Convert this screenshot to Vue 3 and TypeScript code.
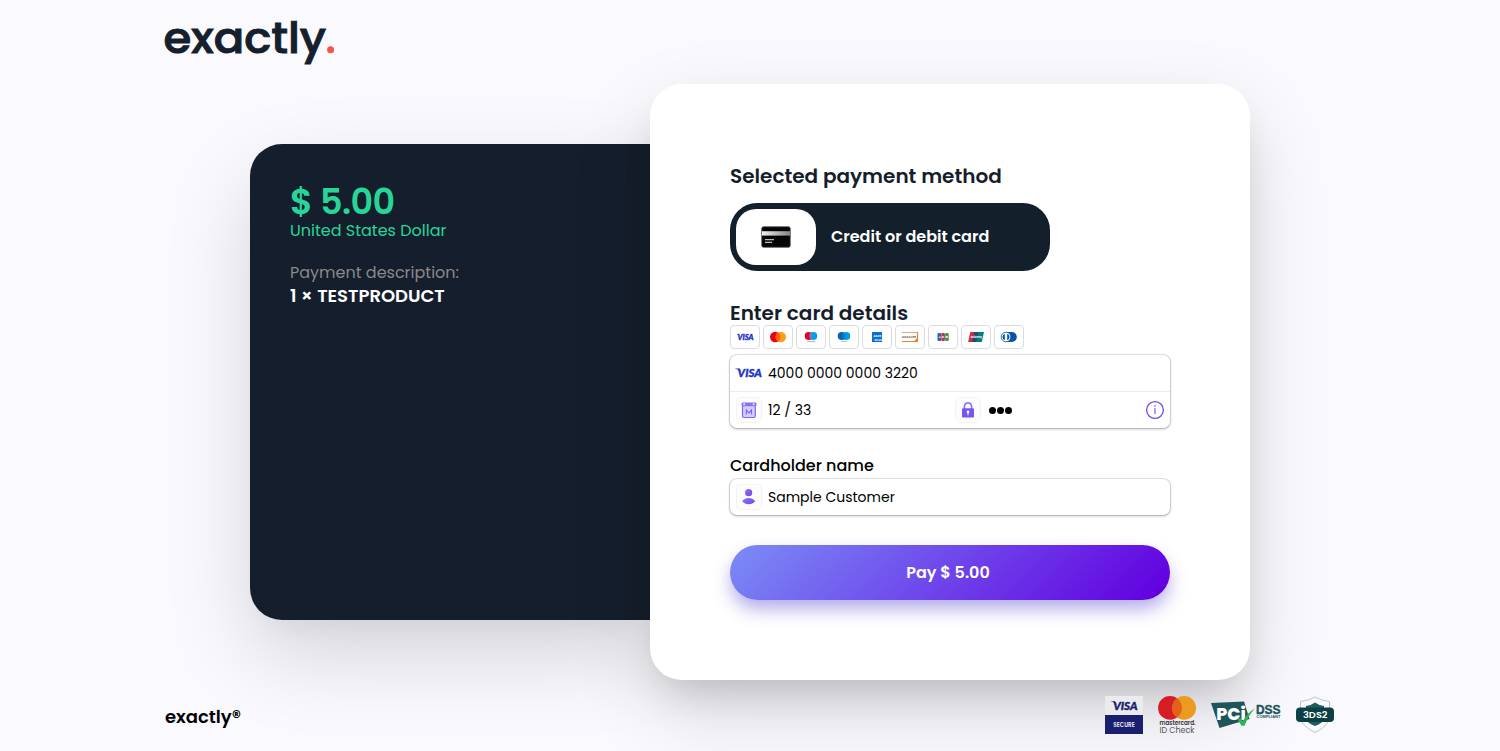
<script setup lang="ts">
interface Brand {
  id: string
  label: string
}

const brands: Brand[] = [
  { id: 'visa', label: 'Visa' },
  { id: 'mastercard', label: 'Mastercard' },
  { id: 'maestro', label: 'Maestro' },
  { id: 'cirrus', label: 'Cirrus' },
  { id: 'amex', label: 'American Express' },
  { id: 'discover', label: 'Discover' },
  { id: 'jcb', label: 'JCB' },
  { id: 'unionpay', label: 'UnionPay' },
  { id: 'diners', label: 'Diners Club' },
]

const amount = '$ 5.00'
const card = { number: '4000 0000 0000 3220', expiry: '12 / 33', holder: 'Sample Customer' }
</script>

<template>
  <div class="page">
    <header class="header">
      <svg class="logo" width="180" height="70" viewBox="0 0 180 70" role="img" aria-label="exactly.">
        <text class="logo-text" x="-1.5" y="42.6" textLength="162.5" lengthAdjust="spacingAndGlyphs">exactly</text>
        <circle cx="165.6" cy="39.8" r="3.5" fill="#f1583e" />
      </svg>
    </header>

    <main class="checkout">
      <section class="summary">
        <div class="amount">{{ amount }}</div>
        <div class="currency">United States Dollar</div>
        <div class="desc-label">Payment description:</div>
        <div class="desc">1 × TESTPRODUCT</div>
      </section>

      <section class="panel">
        <h2 class="title">Selected payment method</h2>
        <div class="method">
          <div class="method-icon">
            <svg width="30" height="22" viewBox="0 0 30 22">
              <defs>
                <linearGradient id="stripe" x1="0" x2="1" y1="0" y2="0">
                  <stop offset="0" stop-color="#f4f0f4" />
                  <stop offset="1" stop-color="#858185" />
                </linearGradient>
              </defs>
              <rect x="0.8" y="0.8" width="28.4" height="20.4" rx="1.6" fill="#050505" stroke="#444" stroke-width=".8" />
              <rect x="1" y="5.2" width="28" height="4.4" fill="url(#stripe)" />
              <path d="M4 13.6h9M4 16.4h7" stroke="#bbb" stroke-width="1.1" />
            </svg>
          </div>
          <span class="method-name">Credit or debit card</span>
        </div>

        <h2 class="title details-title">Enter card details</h2>
        <div class="brands">
          <span v-for="b in brands" :key="b.id" class="brand" :aria-label="b.label">
            <svg width="20" height="14" viewBox="0 0 20 14">
              <template v-if="b.id === 'visa'">
                <text class="visa-text visa-blue" x="2.6" y="9.8" font-size="7.8" textLength="16" lengthAdjust="spacingAndGlyphs">VISA</text>
                <path d="M.9 4.1h3l1.3 2.6C4.3 5.2 3 4.5.9 4.100z" fill="#1c36c8" />
              </template>
              <template v-else-if="b.id === 'mastercard'">
                <circle cx="7.2" cy="7" r="5.2" fill="#eb001b" />
                <circle cx="12.8" cy="7" r="5.2" fill="#f79e1b" />
                <path d="M10 2.6a5.2 5.2 0 0 1 0 8.8 5.2 5.2 0 0 1 0-8.8z" fill="#ff5f00" />
              </template>
              <template v-else-if="b.id === 'maestro'">
                <circle cx="7.7" cy="6" r="4" fill="#eb001b" />
                <circle cx="12.3" cy="6" r="4" fill="#00a2e5" />
                <path d="M10 2.7a4 4 0 0 1 0 6.6 4 4 0 0 1 0-6.6z" fill="#7375cf" />
                <text class="micro" x="6" y="12.2" textLength="8">maestro</text>
              </template>
              <template v-else-if="b.id === 'cirrus'">
                <circle cx="7.7" cy="6" r="4" fill="#0a62b4" />
                <circle cx="12.3" cy="6" r="4" fill="#009ddd" />
                <path d="M10 2.7a4 4 0 0 1 0 6.6 4 4 0 0 1 0-6.6z" fill="#0078c4" />
                <text class="micro" x="7" y="12.2" textLength="6">cirrus</text>
              </template>
              <template v-else-if="b.id === 'amex'">
                <rect x="5" y="2" width="10" height="10" fill="#0d6fce" />
                <text class="amex-text" x="6.2" y="6.6" textLength="8" lengthAdjust="spacingAndGlyphs">AME</text>
                <text class="amex-text" x="7.4" y="10.8" textLength="7.5" lengthAdjust="spacingAndGlyphs">RICAN</text>
              </template>
              <template v-else-if="b.id === 'discover'">
                <path d="M2 2.5h15.5" stroke="#e79a60" stroke-width=".9" />
                <path d="M2 11.500h15.500V2.100" fill="none" stroke="#f08024" stroke-width="1.200" />
                <path d="M13.500 12l4.500-5v5z" fill="#f08024" />
                <text class="discover-text" x="2" y="8.3" textLength="14" lengthAdjust="spacingAndGlyphs">DISCOVER</text>
              </template>
              <template v-else-if="b.id === 'jcb'">
                <rect x="4.5" y="3" width="3.6" height="8" rx="1" fill="#2467ad" />
                <rect x="8.3" y="3" width="3.6" height="8" rx="1" fill="#c92e4a" />
                <rect x="12.1" y="3" width="3.6" height="8" rx="1" fill="#379b45" />
                <text class="jcb-text" x="5.4" y="8.2" textLength="9.4">JCB</text>
              </template>
              <template v-else-if="b.id === 'unionpay'">
                <path d="M4.3 2h6L8.2 12H2.1z" fill="#d62b3c" />
                <path d="M8.3 2h5l-2.2 10H6.1z" fill="#244b75" />
                <path d="M12.5 2H18l-2.2 10h-5.5z" fill="#008085" />
                <text class="union-text" x="4.8" y="7.6" textLength="11" lengthAdjust="spacingAndGlyphs">UnionPay</text>
              </template>
              <template v-else>
                <path d="M6.8 2h6a5 5 0 0 1 0 10h-6z" fill="#0755a2" />
                <circle cx="7" cy="7" r="4.8" fill="#fff" stroke="#0755a2" stroke-width=".8" />
                <path d="M5.8 3.7a3.5 3.5 0 0 0 0 6.6zM8.2 3.7v6.6a3.5 3.5 0 0 0 0-6.6z" fill="#0755a2" />
              </template>
            </svg>
          </span>
        </div>

        <div class="field-group">
          <div class="row row-number">
            <svg class="visa-icon" width="28" height="12" viewBox="0 0 28 12">
              <text class="visa-text visa-blue" x="3.6" y="10.2" font-size="11.8" textLength="24.2" lengthAdjust="spacingAndGlyphs">VISA</text>
              <path d="M.6 1.500h4.800l2.400 4.500C6.200 3.400 3.800 2.200.6 1.500z" fill="#1c36c8" />
            </svg>
            <span class="value">{{ card.number }}</span>
          </div>
          <div class="row row-split">
            <span class="tile">
              <svg width="18" height="18" viewBox="0 0 18 18">
                <rect x="2.5" y="2.5" width="12.8" height="14" rx="1.5" fill="#d6ccfc" stroke="#8066f2" stroke-width="1.2" />
                <rect x="1.5" y="1.5" width="15" height="3.8" rx="1.3" fill="#8a72f4" />
                <circle cx="4.2" cy="3.2" r="1" fill="#e9e3ff" />
                <circle cx="13.6" cy="3.2" r="1" fill="#e9e3ff" />
                <path d="M6.3 13.6V9l2.6 3 2.600-3v4.600" fill="none" stroke="#7f62f0" stroke-width="1.100" />
              </svg>
            </span>
            <span class="value expiry">{{ card.expiry }}</span>
            <span class="tile">
              <svg width="16" height="18" viewBox="0 0 16 18">
                <path d="M4.4 8V5.5a3.6 3.6 0 0 1 7.2 0V8" fill="none" stroke="#8b73f5" stroke-width="1.7" />
                <rect x="2" y="7.2" width="12" height="9.3" rx="1.2" fill="#7656ee" />
                <circle cx="8" cy="10.8" r="1.3" fill="#fff" />
                <path d="M8 11v3.2" stroke="#fff" stroke-width="1" />
              </svg>
            </span>
            <span class="dots"><i></i><i></i><i></i></span>
            <svg class="info" width="20" height="20" viewBox="0 0 20 20">
              <circle cx="10" cy="10" r="8.4" fill="none" stroke="#7646ea" stroke-width="1.3" />
              <path d="M10 8v6M10 5v1.8" stroke="#af98f7" stroke-width="1.9" />
            </svg>
          </div>
        </div>

        <div class="label">Cardholder name</div>
        <div class="field-group holder">
          <span class="tile">
            <svg width="16" height="18" viewBox="0 0 16 18">
              <defs>
                <linearGradient id="person" x1="0" x2="1" y1="0" y2="1">
                  <stop offset="0" stop-color="#8878fb" />
                  <stop offset="1" stop-color="#7443e7" />
                </linearGradient>
              </defs>
              <circle cx="7.6" cy="4.7" r="3.6" fill="url(#person)" />
              <path d="M1.2 13.2C3 10.8 5 10 7.600 10s4.800.8 6.600 3.200c-1.600 2.100-4 3-6.600 3s-4.800-.9-6.400-3z" fill="url(#person)" />
            </svg>
          </span>
          <span class="value">{{ card.holder }}</span>
        </div>

        <button class="pay" type="button"><span class="pay-text">Pay {{ amount }}</span></button>
      </section>
    </main>

    <footer class="footer">
      <span class="company">exactly®</span>
      <div class="badges">
        <svg width="38" height="38" viewBox="0 0 38 38">
          <rect width="38" height="19" fill="#ebebed" />
          <rect y="19" width="38" height="19" fill="#191e6d" />
          <text class="visa-text visa-navy" x="8.2" y="14" font-size="11.8" textLength="24.3" lengthAdjust="spacingAndGlyphs">VISA</text>
          <path d="M5.3 5.3h4.5l2.2 4c-1.5-2.2-3.7-3.3-6.7-4z" fill="#191e6d" />
          <text class="secure-text" x="8.3" y="30.8" textLength="21.5" lengthAdjust="spacingAndGlyphs">SECURE</text>
        </svg>
        <svg width="38" height="38" viewBox="0 0 38 38">
          <circle cx="12" cy="11.9" r="11.9" fill="#d71d24" />
          <circle cx="26.1" cy="11.9" r="11.9" fill="#eb9b20" />
          <path d="M19.05 2.3a11.9 11.9 0 0 1 0 19.2 11.9 11.9 0 0 1 0-19.2z" fill="#e2611c" />
          <text class="mc-text" x="1.5" y="29.2" textLength="36" lengthAdjust="spacingAndGlyphs">mastercard.</text>
          <text class="id-text" x="1.5" y="37.4" textLength="35" lengthAdjust="spacingAndGlyphs">ID Check</text>
        </svg>
        <svg width="70" height="38" viewBox="0 0 70 38">
          <path d="M0 7l33-1.500 5.500 17.500L8.500 32z" fill="#20545b" />
          <text class="pci-text" x="5.300" y="23.600" textLength="29.500" lengthAdjust="spacingAndGlyphs">PCi</text>
          <path d="M26.5 23.5l3.2-1.6 2 3.6C35 19.500 39 15 44 12.500c-4.500 4.500-7.500 10-10.500 17.200h-3z" fill="#2eb25a" />
          <text class="dss-text" x="45" y="17.5" textLength="24.5" lengthAdjust="spacingAndGlyphs">DSS</text>
          <text class="compliant-text" x="45.5" y="22.2" textLength="24" lengthAdjust="spacingAndGlyphs">COMPLIANT</text>
        </svg>
        <svg width="38" height="38" viewBox="0 0 38 38">
          <path d="M4.5 5.5Q13 4.5 19 1q6 3.500 14.500 4.500v14C33.500 28 26 33 19 36.500 12 33 4.500 28 4.500 19.500z" fill="none" stroke="#b6c9ca" stroke-width="1" />
          <path d="M10 10q5-.5 9-3.500 4 3 9 3.500v13q-1 4-9 7-8-3-9-7z" fill="#1d5f60" />
          <rect x="0" y="11.5" width="38" height="14.5" rx="4" fill="#0d4045" />
          <text class="ds-text" x="7" y="21.6" textLength="24.5" lengthAdjust="spacingAndGlyphs">3DS2</text>
        </svg>
      </div>
    </footer>
  </div>
</template>

<style>
body {
  background: #faf9fe;
  overflow: hidden;
}
</style>

<style scoped>
* {
  box-sizing: border-box;
}
svg {
  display: block;
  flex: none;
  overflow: visible;
}
.page {
  height: 751px;
  background: #faf9fe;
  font-family: Poppins, Inter, 'Open Sans', sans-serif;
  color: #000;
  white-space: nowrap;
  display: flex;
  flex-direction: column;
  overflow: hidden;
}
.header {
  height: 84px;
  padding: 10px 0 0 165px;
  flex: none;
}
.logo-text {
  font-size: 43.5px;
  font-weight: 500;
  fill: #151f2d;
  stroke: #151f2d;
  stroke-width: 1px;
}
.checkout {
  display: flex;
  width: 1000px;
  height: 596px;
  margin: 0 auto;
  align-items: center;
  flex: none;
}
.summary {
  width: 400px;
  height: 476px;
  padding: 36px 40px;
  background: #151e2c;
  border-radius: 32px 0 0 32px;
  box-shadow: 0 35px 85px rgba(0, 0, 0, 0.15), 0 20px 30px -20px rgba(70, 40, 160, 0.08);
}
.amount {
  color: #27d598;
  font-size: 35px;
  font-weight: 600;
  line-height: 43px;
  letter-spacing: -0.6px;
}
.currency {
  margin-top: -4px;
  color: #27d598;
  font-size: 16px;
  line-height: 24px;
}
.desc-label {
  margin-top: 18px;
  color: #8a8888;
  font-size: 16px;
  line-height: 24px;
}
.desc {
  color: #fff;
  font-size: 18px;
  font-weight: 600;
  line-height: 22px;
}
.panel {
  width: 600px;
  height: 596px;
  padding: 77px 80px 0;
  background: #fff;
  border-radius: 32px;
  box-shadow: 0 30px 80px rgba(0, 0, 0, 0.14), 0 24px 40px -14px rgba(0, 0, 0, 0.16);
}
.title {
  margin: 0;
  color: #151e2c;
  font-size: 20px;
  font-weight: 600;
  line-height: 30px;
}
.details-title {
  margin-top: 27px;
}
.method {
  width: 320px;
  height: 68px;
  margin-top: 12px;
  padding: 6px;
  display: flex;
  align-items: center;
  background: #13202b;
  border-radius: 27px;
}
.method-icon {
  width: 80px;
  height: 56px;
  border-radius: 20px;
  background: #fff;
  display: flex;
  align-items: center;
  justify-content: center;
}
.method-name {
  margin: 0 0 2px 15px;
  color: #fff;
  font-size: 16px;
  font-weight: 600;
}
.brands {
  display: flex;
  gap: 3px;
  margin-top: -3px;
}
.brand {
  width: 30px;
  height: 24px;
  border: 1px solid #dcdce0;
  border-radius: 4px;
  background: #fff;
  display: flex;
  align-items: center;
  justify-content: center;
}
.visa-text {
  font-family: Lato, 'Open Sans', sans-serif;
  font-weight: 900;
  font-style: italic;
  stroke-width: 0.4px;
}
.visa-blue {
  fill: #1c36c8;
  stroke: #1c36c8;
}
.visa-navy {
  fill: #191e6d;
  stroke: #191e6d;
}
.micro {
  font-size: 2.4px;
  font-weight: 600;
  fill: #888;
}
.amex-text {
  font-size: 4px;
  font-weight: 700;
  fill: #d9ecff;
}
.discover-text {
  font-size: 3.5px;
  font-weight: 600;
  fill: #6c594f;
}
.jcb-text {
  font-size: 3.4px;
  font-weight: 700;
  fill: #fff;
}
.union-text {
  font-size: 3.8px;
  font-weight: 700;
  fill: #fff;
}
.field-group {
  margin-top: 6px;
  border-radius: 7px;
  background: #fff;
  box-shadow: 0 0 0 1px rgba(0, 0, 0, 0.1), 0 1px 3px rgba(0, 0, 0, 0.28);
}
.row {
  display: flex;
  align-items: center;
  gap: 6px;
  padding: 0 5px 0 6px;
}
.row-number {
  height: 37px;
  border-bottom: 1px solid #ececee;
}
.row-split {
  height: 36px;
}
.visa-icon {
  margin-left: -2px;
}
.value {
  font-size: 14px;
  line-height: 20px;
}
.tile {
  width: 26px;
  height: 26px;
  border: 1px solid #f3f3f5;
  border-radius: 5px;
  background: #fcfcfd;
  display: flex;
  align-items: center;
  justify-content: center;
  flex: none;
}
.expiry {
  width: 181px;
}
.dots {
  display: flex;
  gap: 1px;
  margin: 1px 0 0 2px;
}
.dots i {
  width: 7px;
  height: 7px;
  border-radius: 50%;
  background: #000;
}
.info {
  margin-left: auto;
}
.label {
  margin-top: 26px;
  padding-bottom: 1px;
  font-size: 16px;
  font-weight: 500;
  line-height: 24px;
}
.holder {
  height: 36px;
  margin-top: 0;
  padding: 0 6px;
  display: flex;
  align-items: center;
  gap: 6px;
}
.pay {
  width: 440px;
  height: 55px;
  margin-top: 30px;
  padding: 0;
  border: 0;
  border-radius: 28px;
  display: flex;
  align-items: center;
  justify-content: center;
  color: #fff;
  background: linear-gradient(136deg, #7a87f5 4%, #6200e0 97%);
  box-shadow: 0 10px 18px -1px rgba(75, 55, 205, 0.42);
  font: inherit;
  font-size: 16px;
  font-weight: 600;
}
.pay-text {
  margin-right: 4px;
}
.footer {
  height: 71px;
  padding: 16px 166px 0 165px;
  display: flex;
  justify-content: space-between;
  align-items: flex-start;
  position: relative;
}
.company {
  margin-top: 8px;
  font-size: 18px;
  font-weight: 600;
  line-height: 26px;
}
.badges {
  display: flex;
  gap: 15px;
}
.secure-text {
  font-size: 7px;
  font-weight: 600;
  fill: #e8e8f5;
}
.mc-text {
  font-size: 6.5px;
  font-weight: 600;
  fill: #35333a;
}
.id-text {
  font-size: 8px;
  fill: #55535a;
}
.pci-text {
  font-size: 18px;
  font-weight: 800;
  fill: #fff;
}
.dss-text {
  font-family: 'Liberation Sans', sans-serif;
  font-size: 12px;
  font-weight: 700;
  fill: #20545b;
  stroke: #20545b;
  stroke-width: 0.4px;
}
.compliant-text {
  font-family: 'Liberation Sans', sans-serif;
  font-size: 4px;
  font-weight: 700;
  fill: #20545b;
}
.ds-text {
  font-size: 8px;
  font-weight: 600;
  fill: #fff;
}
</style>
